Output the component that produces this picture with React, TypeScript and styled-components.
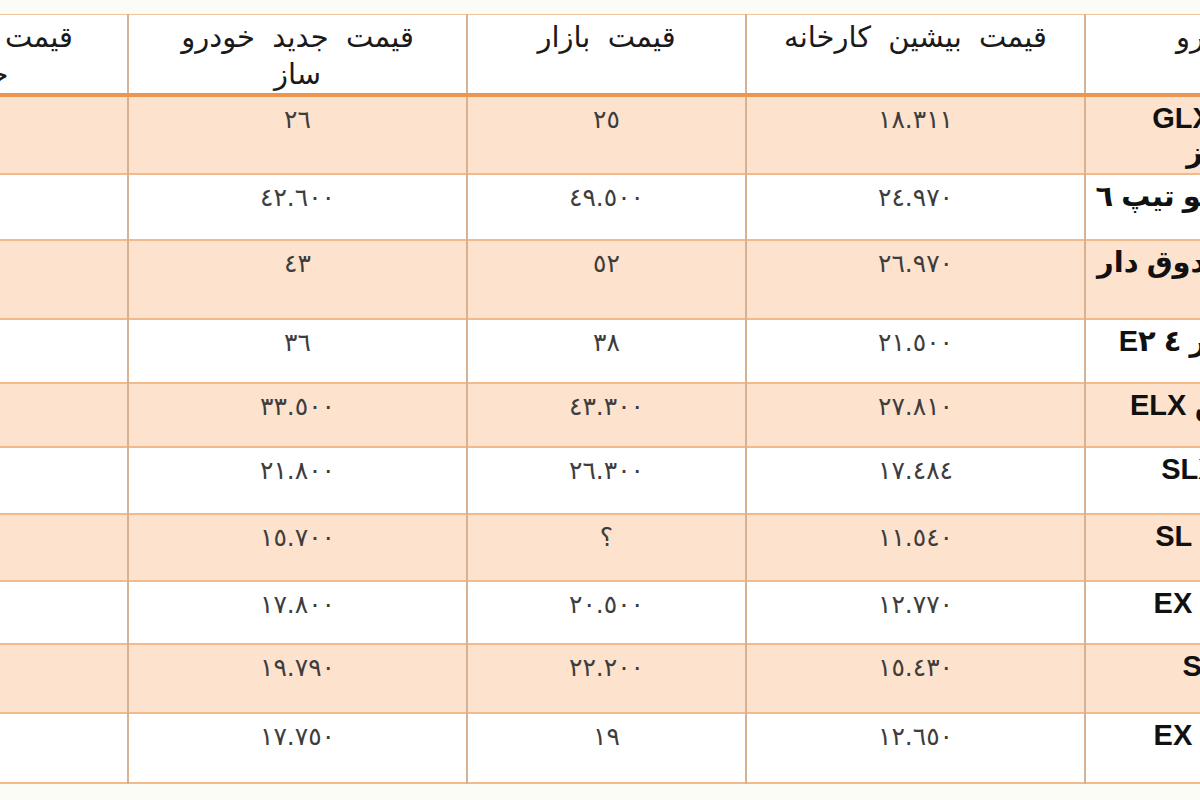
import React from 'react';
import styled, { createGlobalStyle } from 'styled-components';

// the table is wider than the window; both outer columns are cut off like in the source image
const EXTRA_RIGHT = 140;
const COLS = [255, 339, 279, 339, 322];
const TABLE_WIDTH = COLS.reduce((a, b) => a + b, 0);

const GlobalStyle = createGlobalStyle`
  html, body {
    margin: 0;
    padding: 0;
    background: #fcfcf7;
  }
  body {
    font-family: "DejaVu Sans", sans-serif;
    color: #1d1d1d;
  }
`;

const Page = styled.div`
  width: 1200px;
  height: 800px;
  overflow: hidden;
  direction: rtl;
  background: #fcfcf7;
  padding-top: 14px;
  box-sizing: border-box;
`;

const PriceTable = styled.table`
  border-collapse: collapse;
  table-layout: fixed;
  width: ${TABLE_WIDTH}px;
  margin-right: -${EXTRA_RIGHT}px;
  background: #ffffff;
  border-top: 1px solid #f0c49c;
  border-bottom: 2px solid #f0b27f;
`;

const HeadRow = styled.tr`
  height: 78px;
  border-bottom: 4px solid #ea9552;
`;

const HeadCell = styled.th`
  font-weight: normal;
  font-size: 29px;
  line-height: 37px;
  word-spacing: 8px;
  padding: 4px 6px 0;
  text-align: center;
  vertical-align: top;
  color: #1a1a1a;
  border-left: 2px solid #d6b192;
  white-space: nowrap;
`;

const BodyRow = styled.tr<{ $shade: boolean; $height: number }>`
  height: ${(p) => p.$height}px;
  background: ${(p) => (p.$shade ? '#fde2cd' : '#ffffff')};
  border-bottom: 2px solid #f2b98a;
`;

const NameCell = styled.td`
  font-family: "Liberation Sans", "DejaVu Sans", sans-serif;
  font-weight: bold;
  font-size: 29px;
  line-height: 34px;
  padding: 4px 12px 0;
  text-align: right;
  vertical-align: top;
  color: #111;
  border-left: 2px solid #d6b192;
  white-space: nowrap;
`;

const NumCell = styled.td`
  font-size: 25px;
  line-height: 30px;
  letter-spacing: 2px;
  padding: 8px 10px 0;
  text-align: center;
  vertical-align: top;
  color: #3d3d3d;
  border-left: 2px solid #d6b192;
`;

const EmptyCell = styled.td`
  border-left: 2px solid #d6b192;
`;

type Car = {
  name: React.ReactNode;
  factory: string;
  market: string;
  newPrice: string;
  height: number;
};

const cars: Car[] = [
  {
    name: (
      <>
        پژو ٤٠٥ GLX
        <br />
        دوگانه گاز
      </>
    ),
    factory: '١٨.٣١١',
    market: '٢٥',
    newPrice: '٢٦',
    height: 79,
  },
  { name: 'پژو ٢٠٦ نو تیپ ٦', factory: '٢٤.٩٧٠', market: '٤٩.٥٠٠', newPrice: '٤٢.٦٠٠', height: 66 },
  { name: 'پژو ٢ صندوق دار', factory: '٢٦.٩٧٠', market: '٥٢', newPrice: '٤٣', height: 79 },
  { name: 'رانا موتور ٤ E٢', factory: '٢١.٥٠٠', market: '٣٨', newPrice: '٣٦', height: 64 },
  { name: 'پژو پارس ELX', factory: '٢٧.٨١٠', market: '٤٣.٣٠٠', newPrice: '٣٣.٥٠٠', height: 64 },
  { name: 'سمند ٢ SLX', factory: '١٧.٤٨٤', market: '٢٦.٣٠٠', newPrice: '٢١.٨٠٠', height: 67 },
  { name: 'پراید ١٣٢ SL', factory: '١١.٥٤٠', market: '؟', newPrice: '١٥.٧٠٠', height: 67 },
  { name: 'پراید ١١١ EX', factory: '١٢.٧٧٠', market: '٢٠.٥٠٠', newPrice: '١٧.٨٠٠', height: 63 },
  { name: 'ساینا ٢ SX', factory: '١٥.٤٣٠', market: '٢٢.٢٠٠', newPrice: '١٩.٧٩٠', height: 69 },
  { name: 'پراید ١٣١ EX', factory: '١٢.٦٥٠', market: '١٩', newPrice: '١٧.٧٥٠', height: 70 },
];

export default function App() {
  return (
    <>
      <GlobalStyle />
      <Page>
        <PriceTable>
          <colgroup>
            {COLS.map((w, i) => (
              <col key={i} style={{ width: w }} />
            ))}
          </colgroup>
          <thead>
            <HeadRow>
              <HeadCell>خودرو</HeadCell>
              <HeadCell>قیمت بیشین کارخانه</HeadCell>
              <HeadCell>قیمت بازار</HeadCell>
              <HeadCell>
                قیمت جدید خودرو
                <br />
                ساز
              </HeadCell>
              <HeadCell>
                قیمت جدید بازار
                <br />
                حدودی
              </HeadCell>
            </HeadRow>
          </thead>
          <tbody>
            {cars.map((car, i) => (
              <BodyRow key={i} $shade={i % 2 === 0} $height={car.height}>
                <NameCell>{car.name}</NameCell>
                <NumCell>{car.factory}</NumCell>
                <NumCell>{car.market}</NumCell>
                <NumCell>{car.newPrice}</NumCell>
                <EmptyCell />
              </BodyRow>
            ))}
          </tbody>
        </PriceTable>
      </Page>
    </>
  );
}
